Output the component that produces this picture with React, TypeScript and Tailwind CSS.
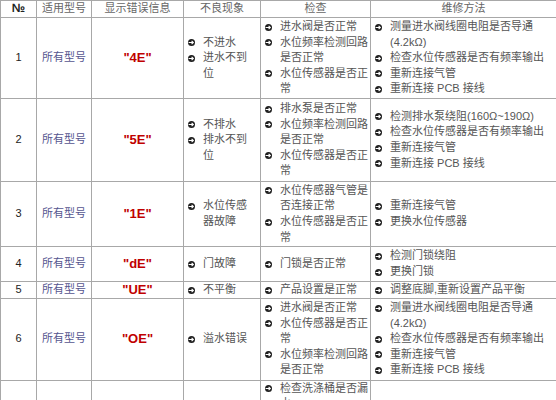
import React from 'react';

type Row = {
  no: string;
  model: string;
  code: string;
  symptom: string[][];
  check: string[][];
  fix: string[][];
  h: string;
};

const rows: Row[] = [
  {
    no: '1',
    model: '所有型号',
    code: '"4E"',
    symptom: [['不进水'], ['进水不到', '位']],
    check: [['进水阀是否正常'], ['水位频率检测回路', '是否正常'], ['水位传感器是否正', '常']],
    fix: [
      ['测量进水阀线圈电阻是否导通', '(4.2kΩ)'],
      ['检查水位传感器是否有频率输出'],
      ['重新连接气管'],
      ['重新连接 PCB 接线'],
    ],
    h: 'h-[81px]',
  },
  {
    no: '2',
    model: '所有型号',
    code: '"5E"',
    symptom: [['不排水'], ['排水不到', '位']],
    check: [['排水泵是否正常'], ['水位频率检测回路', '是否正常'], ['水位传感器是否正', '常']],
    fix: [
      ['检测排水泵绕阻(160Ω~190Ω)'],
      ['检查水位传感器是否有频率输出'],
      ['重新连接气管'],
      ['重新连接 PCB 接线'],
    ],
    h: 'h-[83px]',
  },
  {
    no: '3',
    model: '所有型号',
    code: '"1E"',
    symptom: [['水位传感', '器故障']],
    check: [['水位传感器气管是', '否连接正常'], ['水位传感器是否正', '常']],
    fix: [['重新连接气管'], ['更换水位传感器']],
    h: 'h-[65px]',
  },
  {
    no: '4',
    model: '所有型号',
    code: '"dE"',
    symptom: [['门故障']],
    check: [['门锁是否正常']],
    fix: [['检测门锁绕阻'], ['更换门锁']],
    h: 'h-[35px]',
  },
  {
    no: '5',
    model: '所有型号',
    code: '"UE"',
    symptom: [['不平衡']],
    check: [['产品设置是正常']],
    fix: [['调整底脚,重新设置产品平衡']],
    h: 'h-[16px]',
  },
  {
    no: '6',
    model: '所有型号',
    code: '"OE"',
    symptom: [['溢水错误']],
    check: [['进水阀是否正常'], ['水位传感器是否正', '常'], ['水位频率检测回路', '是否正常']],
    fix: [
      ['测量进水阀线圈电阻是否导通', '(4.2kΩ)'],
      ['检查水位传感器是否有频率输出'],
      ['重新连接气管'],
      ['重新连接 PCB 接线'],
    ],
    h: 'h-[82px]',
  },
  {
    // last row continues below the frame; only its first check line shows
    no: '',
    model: '',
    code: '',
    symptom: [],
    check: [['检查洗涤桶是否漏', '水']],
    fix: [],
    h: 'h-[40px]',
  },
];

function Bullet() {
  return (
    <svg width="7" height="7" viewBox="0 0 7 7" className="mt-[4.5px] shrink-0">
      <circle cx="3.5" cy="3.5" r="3.5" fill="#1f1f1f" />
      <path d="M0.6 3.5 H5.2 M3.6 1.9 L5.3 3.5 L3.6 5.1" stroke="#fff" strokeWidth="1.1" fill="none" />
    </svg>
  );
}

function Items({ items }: { items: string[][] }) {
  return (
    <div className="flex flex-col">
      {items.map((lines, i) => (
        <div key={i} className="flex items-start pl-[4px]">
          <div className="w-[15px] shrink-0">
            <Bullet />
          </div>
          <div className="flex flex-col">
            {lines.map((l, j) => (
              <span key={j} className="whitespace-nowrap">
                {l}
              </span>
            ))}
          </div>
        </div>
      ))}
    </div>
  );
}

const cell = 'border border-[#a8a8a8] p-0 align-middle';

export default function App() {
  return (
    <div className="bg-white w-[556px] overflow-hidden">
      <table
        className="w-[556px] table-fixed border-collapse text-[11px] leading-[15.6px] text-[#555]"
        style={{ fontFamily: '"Liberation Sans", "Noto Sans CJK SC", sans-serif' }}
      >
        <colgroup>
          <col className="w-[36px]" />
          <col className="w-[55px]" />
          <col className="w-[92px]" />
          <col className="w-[77px]" />
          <col className="w-[110px]" />
          <col className="w-[186px]" />
        </colgroup>
        <thead>
          <tr className="h-[17px] text-[#666]">
            <th className={`${cell} font-bold text-[#222] text-[12px]`}>№</th>
            <th className={`${cell} font-normal`}>适用型号</th>
            <th className={`${cell} font-normal`}>显示错误信息</th>
            <th className={`${cell} font-normal`}>不良现象</th>
            <th className={`${cell} font-normal`}>检查</th>
            <th className={`${cell} font-normal`}>维修方法</th>
          </tr>
        </thead>
        <tbody>
          {rows.map((r, i) => (
            <tr key={i} className={r.h}>
              <td className={`${cell} text-center text-[#222]`}>{r.no}</td>
              <td className={`${cell} text-center text-[#55558f]`}>{r.model}</td>
              <td className={`${cell} text-center text-[13px] font-bold text-[#c00000]`}>{r.code}</td>
              <td className={cell}>
                <Items items={r.symptom} />
              </td>
              <td className={`${cell} ${r.no ? '' : 'align-top'}`}>
                <Items items={r.check} />
              </td>
              <td className={cell}>
                <Items items={r.fix} />
              </td>
            </tr>
          ))}
        </tbody>
      </table>
    </div>
  );
}
